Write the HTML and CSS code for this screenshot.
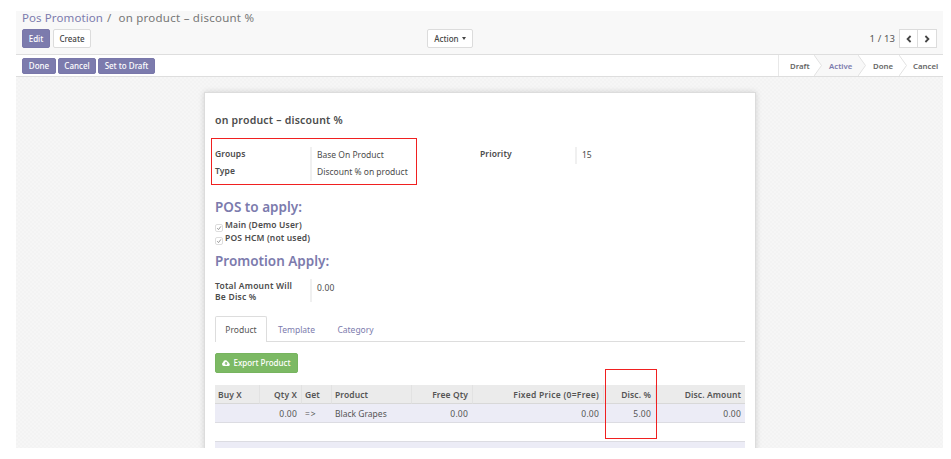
FILE: index.html
```
<!DOCTYPE html>
<html lang="en">
<head>
<meta charset="utf-8">
<title>Pos Promotion</title>
<link rel="stylesheet" href="styles.css">
</head>
<body>
<div class="app">
  <header class="control-panel">
    <div class="breadcrumb"><a>Pos Promotion</a><span class="slash">/</span><span class="current">on product – discount %</span></div>
    <div class="toolbar">
      <div class="actions"><button class="btn primary edit">Edit</button><button class="btn create">Create</button></div>
      <button class="btn action">Action <i class="caret"></i></button>
      <div class="pager"><span class="count">1 / 13</span>
        <button class="btn nav"><svg viewBox="0 0 8 8"><path d="M5.6 1 2.6 4l3 3"/></svg></button><button class="btn nav next"><svg viewBox="0 0 8 8"><path d="m2.4 1 3 3-3 3"/></svg></button>
      </div>
    </div>
  </header>
  <div class="statusbar">
    <button class="btn primary done">Done</button><button class="btn primary cancel">Cancel</button><button class="btn primary draft">Set to Draft</button>
    <div class="steps">
      <span class="step s-draft">Draft</span>
      <span class="step s-active"><svg class="arrow" viewBox="0 0 8 21"><path class="fill" d="M0 0h8v21H0L7.5 10.5z"/><path d="M0 0l7.5 10.5L0 21"/></svg>Active</span>
      <span class="step s-done"><svg class="arrow" viewBox="0 0 8 21"><path class="fill" d="M0 0l7.5 10.5L0 21z"/><path d="M0 0l7.5 10.5L0 21"/></svg>Done</span>
      <span class="step s-cancel"><svg class="arrow" viewBox="0 0 8 21"><path d="M0 0l7.5 10.5L0 21"/></svg>Cancel</span>
    </div>
  </div>
  <main class="canvas">
    <section class="sheet">
      <h1>on product – discount %</h1>
      <div class="fields">
        <dl class="group">
          <dt>Groups</dt><dd>Base On Product</dd>
          <dt>Type</dt><dd>Discount % on product</dd>
        </dl>
        <dl class="group right"><dt>Priority</dt><dd>15</dd></dl>
        <i class="mark mark-fields"></i>
      </div>
      <h2 class="h-pos">POS to apply:</h2>
      <ul class="checks">
        <li><svg viewBox="0 0 8 8"><rect x=".5" y=".5" width="7" height="7" rx="1.5"/><path d="M2.2 4.2l1.3 1.4L5.9 2.4"/></svg><span>Main (Demo User)</span></li>
        <li><svg viewBox="0 0 8 8"><rect x=".5" y=".5" width="7" height="7" rx="1.5"/><path d="M2.2 4.2l1.3 1.4L5.9 2.4"/></svg><span>POS HCM (not used)</span></li>
      </ul>
      <h2 class="h-promo">Promotion Apply:</h2>
      <dl class="group total"><dt>Total Amount Will<br>Be Disc %</dt><dd>0.00</dd></dl>
      <nav class="tabs"><a class="tab on">Product</a><a class="tab">Template</a><a class="tab">Category</a></nav>
      <button class="btn export"><svg viewBox="0 0 16 12"><path fill="#fff" fill-rule="evenodd" d="M4 12a4 4 0 0 1-1.6-7.6A4.5 4.5 0 0 1 11 3.200a3 3 0 0 1 2.500 3A3 3 0 0 1 13 12zM8 3.500 4.700 7H7v3h2.400V7h2.100z"/></svg>Export Product</button>
      <div class="table-wrap">
        <table>
          <colgroup><col class="c1"><col class="c2"><col class="c3"><col class="c4"><col class="c5"><col class="c6"><col class="c7"><col class="c8"></colgroup>
          <thead><tr><th>Buy X</th><th class="num">Qty X</th><th>Get</th><th>Product</th><th class="num">Free Qty</th><th class="num price">Fixed Price (0=Free)</th><th class="num">Disc. %</th><th class="num">Disc. Amount</th></tr></thead>
          <tbody>
            <tr class="odd"><td></td><td class="num">0.00</td><td class="arrow-cell">=&gt;</td><td>Black Grapes</td><td class="num">0.00</td><td class="num">0.00</td><td class="num">5.00</td><td class="num">0.00</td></tr>
            <tr><td colspan="8"></td></tr>
            <tr class="odd"><td colspan="8"></td></tr>
          </tbody>
        </table>
        <i class="mark mark-disc"></i>
      </div>
    </section>
  </main>
</div>
</body>
</html>
```
FILE: styles.css
```
* { box-sizing: border-box; }
body { margin: 0; background: #fff; color: #555; font: 8.5px/12px "Noto Sans", "Open Sans", sans-serif; }
h1, h2, dl, dd, ul { margin: 0; padding: 0; }
button { font: inherit; }
.app { width: 927px; height: 437px; margin: 11px 0 0 16px; display: flex; flex-direction: column; }

.control-panel { height: 44px; flex: none; background: #f8f8f8; border-bottom: 1px solid #dedede; padding: 0 6px; }
.breadcrumb { height: 18px; display: flex; font-size: 11.5px; line-height: 13px; color: #777; letter-spacing: .1px; white-space: pre; }
.breadcrumb a { color: #7c7bad; }
.breadcrumb .slash { margin: 0 7px 0 4px; }
.breadcrumb .current { letter-spacing: .25px; }
.toolbar { display: grid; grid-template-columns: 405px 1fr auto; }
.actions { display: flex; gap: 3px; }
.btn { height: 19px; padding: 0; border: 1px solid #dcdcdc; border-radius: 2px; background: #fff; color: #444; font-weight: 500; font-size: 8px; line-height: 12px; display: flex; align-items: center; justify-content: center; white-space: nowrap; }
.primary { background: #7c7bad; border-color: #7977aa; color: #fff; }
.edit { width: 28px; }
.create { width: 38px; }
.action { width: 46px; gap: 3px; }
.caret { border: 2.5px solid transparent; border-top: 3px solid #444; border-bottom: 0; }
.pager { display: flex; align-items: center; }
.count { font-size: 9.5px; margin-right: 4px; letter-spacing: .1px; }
.nav { width: 19px; border-radius: 0; }
.next { margin-left: -1px; width: 20px; }
.nav svg { width: 8px; height: 8px; fill: none; stroke: #444; stroke-width: 1.8; }

.statusbar { height: 22px; flex: none; background: #fff; border-bottom: 1px solid #dedede; padding-left: 6px; display: flex; align-items: center; gap: 2px; }
.statusbar .btn { height: 16px; }
.done { width: 34px; }
.cancel { width: 38px; }
.draft { width: 57px; }
.steps { display: flex; align-self: stretch; margin-left: auto; border-left: 1px solid #e8e8e8; }
.step { display: flex; align-items: center; font-size: 7.8px; font-weight: 600; color: #666; }
.s-draft { width: 35px; padding-left: 11px; }
.s-active { width: 44px; color: #7c7bad; background: linear-gradient(90deg, #fff 8px, #f8f8f8 8px); }
.s-done { width: 41px; }
.s-cancel { width: 44px; }
.s-cancel .arrow { margin-right: 6px; }
.arrow { width: 8px; height: 21px; margin-right: 7px; flex: none; fill: none; stroke: #e2e2e2; }
.arrow .fill { stroke: none; fill: #f8f8f8; }

.canvas { flex: 1; min-height: 0; overflow: hidden; padding: 15px 188px 0; background: #f4f4f4 repeating-conic-gradient(#f3f3f3 0 25%, #f6f6f6 0 50%) 0 0 / 4px 4px; }
.sheet { width: 552px; height: 400px; padding: 20px 10px 0; background: #fff; border: 1px solid #dcdcdc; box-shadow: 0 0 6px rgba(0, 0, 0, .15); }
h1 { font-size: 10.5px; line-height: 14px; font-weight: 600; color: #4c4c4c; letter-spacing: .22px; }
.fields { position: relative; display: flex; margin-top: 20px; height: 37px; }
.group { width: 265px; display: grid; grid-template-columns: 95px 1fr; grid-auto-rows: 17px; color: #4c4c4c; }
dt { font-weight: 600; line-height: 12px; padding-top: 1px; letter-spacing: .12px; }
dd { border-left: 2px solid #f0f0f0; padding: 2px 0 0 5px; }
.mark { position: absolute; border: 1px solid #f02020; }
.mark-fields { left: -4px; top: -9px; width: 206px; height: 47px; }
h2 { font-size: 13.5px; line-height: 18px; font-weight: 600; color: #7c7bad; }
.h-pos { margin-top: 14px; }
.checks { list-style: none; margin-top: 3px; }
.checks li { height: 13px; display: flex; font-weight: 600; color: #4c4c4c; letter-spacing: .15px; }
.checks svg { width: 8px; height: 8px; margin: 5px 2px 0 0; fill: #fff; stroke: #ddd; }
.checks path { fill: none; stroke: #999; }
.h-promo { margin-top: 7px; }
.total { margin-top: 9px; grid-auto-rows: 23px; }
.total dt { line-height: 11px; letter-spacing: .22px; }
.total dd { letter-spacing: .2px; padding-top: 3px; }
.tabs { display: flex; height: 26px; margin-top: 14px; border-bottom: 1px solid #ddd; color: #7c7bad; }
.tab { width: 59px; padding: 8px 0 0; text-align: center; }
.on { width: 52px; height: 26px; padding-top: 7px; background: #fff; border: 1px solid #ddd; border-bottom: 0; border-radius: 2px 2px 0 0; color: #555; }
.export { width: 83px; height: 20px; margin-top: 11px; gap: 3px; background: #7cb964; border-color: #77b45f; color: #fff; }
.export svg { width: 8px; height: 6px; }
.table-wrap { position: relative; margin-top: 12px; }
table { width: 530px; table-layout: fixed; border-collapse: separate; border-spacing: 0; }
.c1 { width: 45px; } .c2 { width: 42px; } .c3 { width: 30px; } .c4 { width: 80px; }
.c5 { width: 61px; } .c6 { width: 131px; } .c7 { width: 52px; } .c8 { width: 89px; }
th, td { height: 19px; padding: 1px 4px 0 3px; text-align: left; white-space: nowrap; line-height: 12px; }
th { font-weight: 600; background: #ebebeb; border-right: 1px solid #e2e2e2; border-bottom: 1px solid #d8d8d8; color: #555; letter-spacing: .1px; }
td { border-bottom: 1px solid #dcdce2; }
td.num { padding: 2px 5px 0 0; letter-spacing: .2px; }
.arrow-cell { letter-spacing: 1px; }
th:last-child { border-right: 0; }
th:last-child, td.num:last-child { padding-right: 4px; }
.price { letter-spacing: .28px; }
.odd td { background: #ececf6; padding-top: 2px; }
.num { text-align: right; }
.mark-disc { left: 390px; top: -16px; width: 52px; height: 70px; }
```
